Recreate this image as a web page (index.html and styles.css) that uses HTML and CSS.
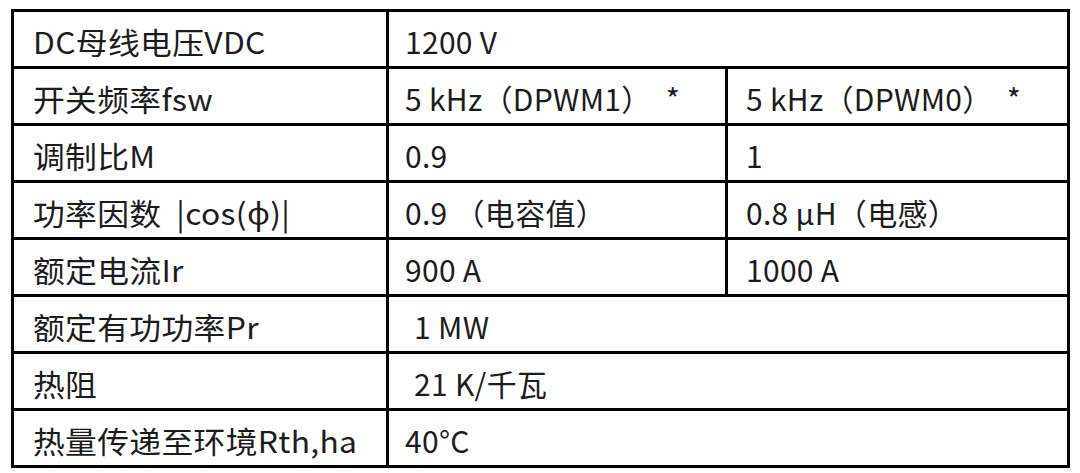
FILE: index.html
```html
<!DOCTYPE html>
<html lang="zh">
<head>
<meta charset="utf-8">
<link rel="stylesheet" href="styles.css">
</head>
<body>
<table class="spec">
  <colgroup>
    <col class="c1"><col class="c2"><col class="c3">
  </colgroup>
  <tbody>
    <tr><td class="k"><span>DC母线电压VDC</span></td><td class="v" colspan="2">1200 V</td></tr>
    <tr><td class="k"><span>开关频率fsw</span></td><td class="v">5 kHz（DPWM1）&nbsp; *</td><td class="v3">5 kHz（DPWM0）&nbsp; *</td></tr>
    <tr><td class="k"><span>调制比M</span></td><td class="v">0.9</td><td class="v3">1</td></tr>
    <tr><td class="k"><span>功率因数 &nbsp;|cos(ϕ)|</span></td><td class="v">0.9 （电容值）</td><td class="v3">0.8 μH（电感）</td></tr>
    <tr><td class="k"><span>额定电流Ir</span></td><td class="v">900 A</td><td class="v3">1000 A</td></tr>
    <tr><td class="k"><span>额定有功功率Pr</span></td><td class="v ind" colspan="2">1 MW</td></tr>
    <tr><td class="k"><span>热阻</span></td><td class="v ind" colspan="2">21 K/千瓦</td></tr>
    <tr><td class="k"><span>热量传递至环境Rth,ha</span></td><td class="v" colspan="2">40°C</td></tr>
  </tbody>
</table>
</body>
</html>
```
FILE: styles.css
```css
html, body {
  margin: 0;
  padding: 0;
  background: #ffffff;
}
body {
  padding: 9px 0 0 11px;
  font-family: "Noto Sans CJK SC", "Noto Sans", sans-serif;
  color: #1c1c1c;
}
.spec {
  border-collapse: collapse;
  table-layout: fixed;
  width: 1056px;
  border: 3px solid #000;
}
.c1 { width: 375px; }
.c2 { width: 339px; }
.c3 { width: 342px; }
.spec tr { height: 57px; }
.spec td {
  border: 3px solid #000;
  font-size: 30px;
  line-height: 1;
  padding: 3px 0 0 0;
  white-space: nowrap;
  vertical-align: middle;
  letter-spacing: 0.3px;
}
.k { padding-left: 19px !important; }
.k span {
  display: inline-block;
  transform: scaleX(1.06);
  transform-origin: left center;
}
.v { padding-left: 16px !important; }
.v3 { padding-left: 18px !important; }
.ind { padding-left: 25px !important; }
```
